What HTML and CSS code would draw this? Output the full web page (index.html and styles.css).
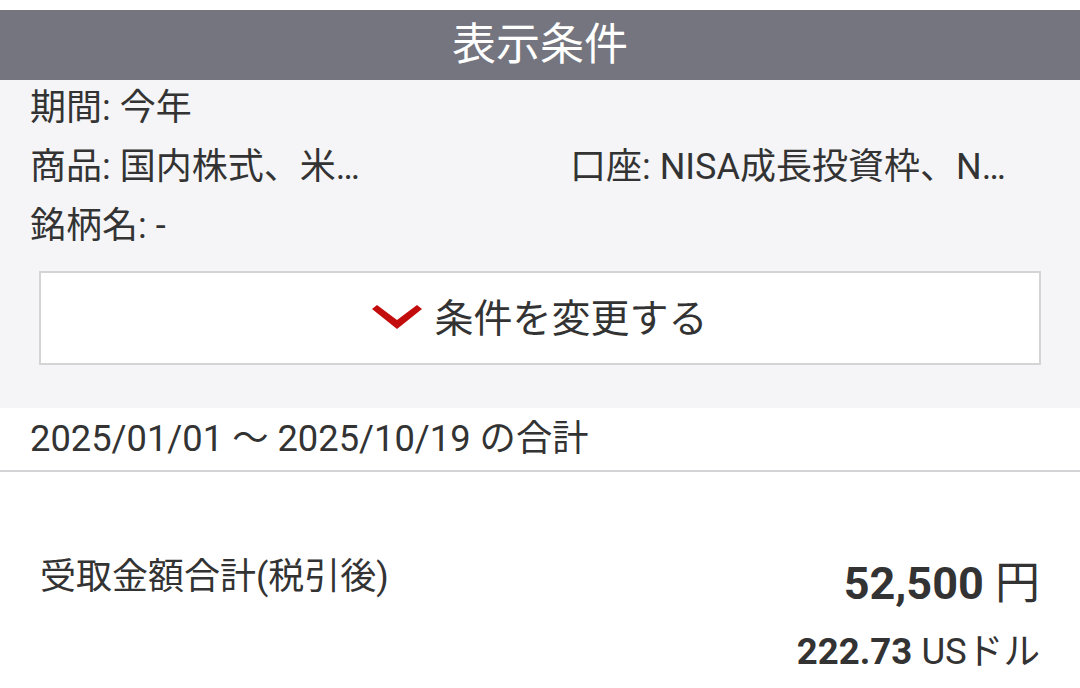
FILE: index.html
```html
<!DOCTYPE html>
<html lang="ja">
<head>
<meta charset="utf-8">
<link rel="stylesheet" href="styles.css">
</head>
<body>
<div class="top-gap"></div>
<div class="header">表示条件</div>
<div class="conditions">
  <div class="row">期間: 今年</div>
  <div class="row row-split">
    <span>商品: 国内株式、米…</span>
    <span>口座: NISA成長投資枠、N…</span>
  </div>
  <div class="row">銘柄名: -</div>
  <div class="change-btn">
    <svg class="chevron" width="50" height="25" viewBox="0 0 50 25"><polygon points="0,4 5,0 25,15 45,0 50,4 25,24" fill="#c30d0d"/></svg>
    <span>条件を変更する</span>
  </div>
</div>
<div class="period">2025/01/01 〜 2025/10/19 の合計</div>
<div class="summary">
  <div class="label">受取金額合計(税引後)</div>
  <div class="amounts">
    <div class="amount-jpy"><b>52,500</b> 円</div>
    <div class="amount-usd"><b>222.73</b> USドル</div>
  </div>
</div>
</body>
</html>
```
FILE: styles.css
```css
html, body {
  margin: 0;
  padding: 0;
  background: #ffffff;
}
body {
  width: 1080px;
  font-family: Roboto, "Noto Sans CJK JP", sans-serif;
  color: #333333;
}
.top-gap {
  height: 10px;
}
.header {
  height: 70px;
  background: #74757f;
  color: #ffffff;
  font-size: 44px;
  line-height: 70px;
  text-align: center;
}
.conditions {
  background: #f5f5f7;
  padding: 0 30px 43px;
  display: flex;
  flex-direction: column;
  gap: 3px;
}
.row {
  font-size: 36px;
  line-height: 56px;
  white-space: nowrap;
}
.row-split {
  display: grid;
  grid-template-columns: 540px 1fr;
}
.change-btn {
  margin: 14px 9px 0;
  height: 90px;
  padding-bottom: 6px;
  box-sizing: content-box;
  height: 84px;
  background: #ffffff;
  border: 2px solid #d4d4d6;
  display: flex;
  align-items: center;
  justify-content: center;
  gap: 12px;
  font-size: 39px;
  color: #333333;
}
.chevron {
  display: block;
  margin-top: 4px;
}
.period {
  height: 62px;
  line-height: 62px;
  padding: 0 30px;
  font-size: 36.3px;
  border-bottom: 2px solid #d4d4d6;
  background: #ffffff;
}
.summary {
  display: flex;
  justify-content: space-between;
  align-items: flex-start;
  padding: 82px 40px 0;
}
.label {
  font-size: 36px;
  line-height: 46px;
}
.amounts {
  display: flex;
  flex-direction: column;
  align-items: flex-end;
  gap: 8px;
}
.amount-jpy {
  font-size: 45px;
  line-height: 60px;
}
.amount-usd {
  font-size: 36.6px;
  line-height: 60px;
}
.amounts b {
  font-weight: 700;
}
```
